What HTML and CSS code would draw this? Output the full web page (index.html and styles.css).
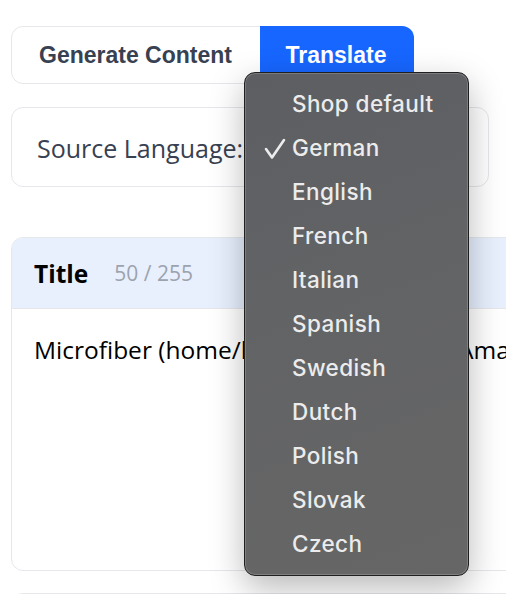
FILE: index.html
```html
<!DOCTYPE html>
<html lang="en">
<head>
    <meta charset="UTF-8">
    <meta name="viewport" content="width=device-width, initial-scale=1.0">
    <title>Translate</title>
    <link rel="stylesheet" href="styles.css">
</head>
<body>
    <div class="page">
        <div class="tabs">
            <button class="tab">Generate Content</button>
            <button class="tab active">Translate</button>
        </div>

        <div class="source-card">
            <span class="source-label">Source Language:</span>
        </div>

        <div class="field-card">
            <div class="field-head">
                <span class="field-name">Title</span>
                <span class="field-count">50 / 255</span>
            </div>
            <div class="field-body">Microfiber (home/kitchen) towels, by Amazon Basics</div>
        </div>

        <div class="field-card next"></div>
    </div>

    <!-- native select popup, opened -->
    <ul class="lang-menu">
        <li>Shop default</li>
        <li>
            <svg class="check" width="22" height="22" viewBox="0 0 22 22">
                <polyline points="2,11 8,19.5 20,2" fill="none" stroke="#ececec" stroke-width="2.6" stroke-linecap="round" stroke-linejoin="round"/>
            </svg>German
        </li>
        <li>English</li>
        <li>French</li>
        <li>Italian</li>
        <li>Spanish</li>
        <li>Swedish</li>
        <li>Dutch</li>
        <li>Polish</li>
        <li>Slovak</li>
        <li>Czech</li>
    </ul>
</body>
</html>
```

FILE: styles.css
```css
body {
    margin: 0;
    background: #fff;
    font-family: "Open Sans", sans-serif;
    overflow: hidden;
    height: 594px;
    position: relative;
}
.page {
    padding: 26px 0 0 11px;
    width: 530px;
}
.tabs {
    display: flex;
    width: 401px;
    height: 56px;
    border: 1px solid #e5e7eb;
    border-radius: 12px;
}
.tab {
    border: none;
    background: none;
    font-family: "Liberation Sans", Arial, sans-serif;
    font-weight: bold;
    font-size: 23px;
    color: #374151;
    padding: 0 0 0 27px;
    cursor: pointer;
}
.tab.active {
    background-color: #1766ff;
    color: #fff;
    width: 154px;
    margin: -1px -1px -1px auto;
    border-radius: 0 12px 12px 0;
    padding: 0 2px 0 0;
}
.source-card {
    margin-top: 23px;
    height: 78px;
    border: 1px solid #e5e7eb;
    border-radius: 12px;
    display: flex;
    align-items: center;
    padding-left: 25px;
    width: 451px;
}
.source-label {
    font-size: 25px;
    color: #374151;
    margin-top: 1px;
}
.field-card {
    margin-top: 50px;
    height: 332px;
    border: 1px solid #e5e7eb;
    border-radius: 12px;
    overflow: hidden;
}
.field-head {
    background-color: #e8f0fe;
    height: 70px;
    border-bottom: 1px solid #e5e7eb;
    display: flex;
    align-items: center;
    padding-left: 22px;
}
.field-name {
    font-weight: bold;
    font-size: 24.5px;
    color: #000;
}
.field-count {
    font-size: 21px;
    color: #9ca3af;
    margin-left: 26px;
}
.field-body {
    padding: 24px 22px;
    font-size: 24.5px;
    color: #000;
    white-space: nowrap;
}
.field-card.next {
    margin-top: 22px;
    height: 60px;
}
.lang-menu {
    position: absolute;
    left: 244px;
    top: 72px;
    width: 225px;
    height: 504px;
    box-sizing: border-box;
    margin: 0;
    padding: 9px 0 0;
    list-style: none;
    background: linear-gradient(160deg, #5c5e62 0%, #626365 40%, #666666 100%);
    border: 1px solid #1f1f1f;
    border-radius: 11px;
    box-shadow: inset 0 0 0 1px rgba(255, 255, 255, 0.18), 0 12px 34px rgba(0, 0, 0, 0.28);
}
.lang-menu li {
    height: 44px;
    line-height: 44px;
    padding-left: 47px;
    font-family: Inter, sans-serif;
    font-weight: 500;
    font-size: 22.5px;
    letter-spacing: 0.4px;
    color: #ececec;
    position: relative;
}
.check {
    position: absolute;
    left: 19px;
    top: 12px;
}
```
